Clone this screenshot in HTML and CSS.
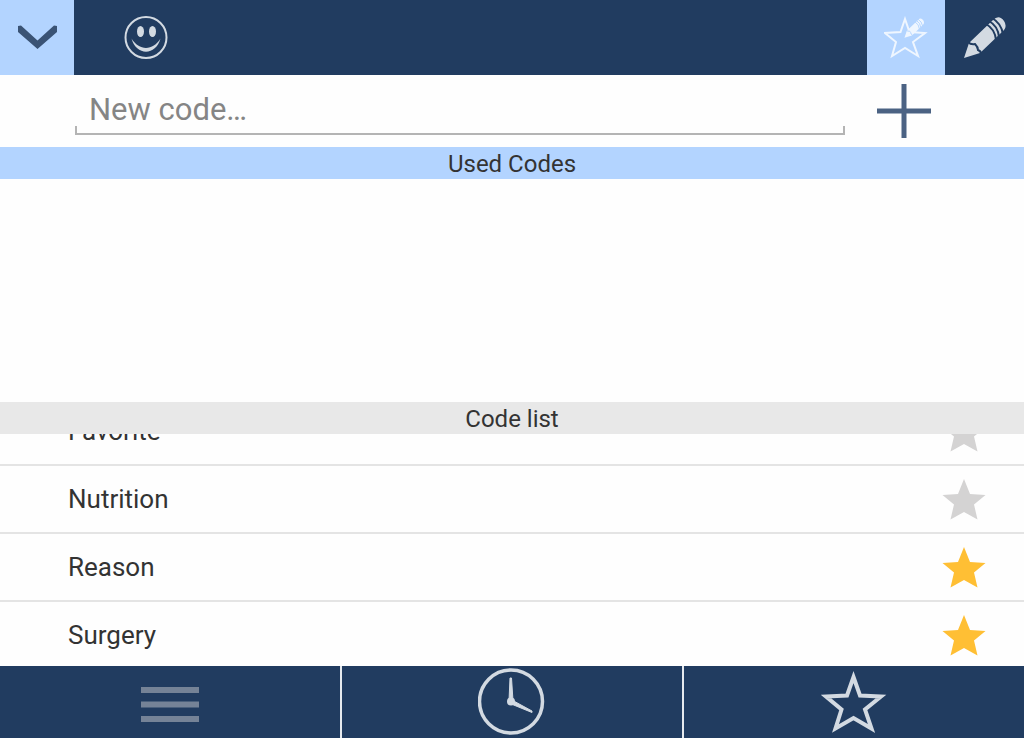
FILE: index.html
```html
<!DOCTYPE html>
<html lang="en">
<head>
    <meta charset="UTF-8" />
    <meta name="viewport" content="width=device-width, initial-scale=1.0" />
    <title>Codes</title>
    <link rel="stylesheet" href="styles.css">
</head>
<body>
    <!-- shared star shape for the code list -->
    <svg class="defs" aria-hidden="true">
        <symbol id="star" viewBox="0 0 44 42">
            <path d="M22 1L28 16L43.500 17L32 26.500L35.500 41.500L22 34L8.500 41.500L12 26.500L.5 17L16 16Z" />
        </symbol>
    </svg>

    <header class="topbar">
        <button class="tool active collapse" aria-label="Collapse">
            <svg width="40" height="26" viewBox="0 0 40 26">
                <path d="M1 1L4 .5L20.500 15.500L37 .5L40 1V7L20.500 24L1 7Z" fill="#3a5375" />
            </svg>
        </button>
        <button class="tool smiley" aria-label="Smiley">
            <svg width="44" height="44" viewBox="0 0 44 44" fill="#d3dae2">
                <circle cx="22" cy="21.500" r="20.500" fill="none" stroke="#d3dae2" stroke-width="2" />
                <ellipse cx="16.500" cy="15.500" rx="3.500" ry="5.500" />
                <ellipse cx="28.500" cy="15.500" rx="3.500" ry="5.500" />
                <path d="M7.500 22.500C15 35 29 35 36.500 22.500C32 40 12 40 7.500 22.500Z" />
            </svg>
        </button>
        <button class="tool active favorites" aria-label="Edit favorites">
            <svg width="44" height="44" viewBox="0 0 44 44">
                <path d="M21 3L25.500 16L41 17L29 26L34 40L21 32L8 40L12 26L1 17L16.500 16Z" fill="none" stroke="#eff6ff" stroke-width="2" />
                <g transform="translate(20 2) scale(.47)" fill="#eff6ff" stroke="#b3d4ff">
                    <use href="#pencil" />
                </g>
            </svg>
        </button>
        <button class="tool edit" aria-label="Edit">
            <svg width="44" height="44" viewBox="0 0 44 44">
                <g id="pencil">
                    <path d="M1 42L6 27L30 4Q36 -2 41 5Q45 11 39 16L17 37Z" stroke="none" />
                    <path d="M5 26Q8 29 12 28Q15 31 15 34Q18 35 18 38M23 8Q32 13 33 24M26 5Q35 10 36 21M29 2Q38 7 40 18" fill="none" stroke-width="2" />
                </g>
            </svg>
        </button>
    </header>

    <form class="new-code">
        <div class="field">
            <input type="text" placeholder="New code…" aria-label="New code" />
        </div>
        <button type="button" class="add" aria-label="Add code">
            <svg width="54" height="54" viewBox="0 0 54 54">
                <path d="M0 27H54M27 0V54" stroke="#4b6283" stroke-width="5" />
            </svg>
        </button>
    </form>

    <main class="content">
        <section class="used">
            <h2>Used Codes</h2>
        </section>
        <section class="codes">
            <h2>Code list</h2>
            <ul class="code-list">
                <li>
                    <span>Favorite</span>
                    <button class="star" aria-label="Favorite"><svg><use href="#star" /></svg></button>
                </li>
                <li>
                    <span>Nutrition</span>
                    <button class="star" aria-label="Nutrition"><svg><use href="#star" /></svg></button>
                </li>
                <li>
                    <span>Reason</span>
                    <button class="star on" aria-label="Reason"><svg><use href="#star" /></svg></button>
                </li>
                <li>
                    <span>Surgery</span>
                    <button class="star on" aria-label="Surgery"><svg><use href="#star" /></svg></button>
                </li>
            </ul>
        </section>
    </main>

    <nav class="bottombar">
        <button aria-label="List">
            <svg width="58" height="66" viewBox="0 0 58 66">
                <path d="M0 21H58M0 35.500H58M0 50H58" stroke="#758397" stroke-width="6" />
            </svg>
        </button>
        <button aria-label="Recent">
            <svg width="68" height="68" viewBox="0 0 68 68">
                <circle cx="33" cy="33.500" r="31.500" fill="none" stroke="#d3dae2" stroke-width="3.500" />
                <circle cx="33" cy="33.500" r="4" fill="#d3dae2" />
                <path d="M31 33L32 10H33.500L35 33ZM33 31.500L54 43V44.500L32 35.500Z" fill="#d3dae2" stroke="#d3dae2" stroke-linejoin="round" />
            </svg>
        </button>
        <button aria-label="Favorites">
            <svg width="66" height="66" viewBox="0 0 66 66">
                <path d="M32.500 8L39 26.500L60 27.500L44 40.500L50.500 59.500L32.500 49L14.500 59.500L20.500 40.500L5 27.500L26 26.500Z" fill="none" stroke="#d3dae2" stroke-width="4" />
            </svg>
        </button>
    </nav>
</body>
</html>
```
FILE: styles.css
```css
:root {
    --navy: #213c60;
    --light-blue: #b3d4ff;
    --text: #333333;
}

* {
    box-sizing: border-box;
    margin: 0;
    padding: 0;
}

body {
    display: flex;
    flex-direction: column;
    height: 100vh;
    font-family: Roboto, sans-serif;
    background: #fefefe;
    color: var(--text);
}

button {
    display: flex;
    align-items: center;
    justify-content: center;
    border: none;
    background: none;
    cursor: pointer;
}

.defs {
    position: absolute;
    width: 0;
    height: 0;
}

.topbar {
    display: flex;
    flex: none;
    height: 75px;
    background: var(--navy);
}

.tool {
    width: 78px;
}

.tool.active {
    background: var(--light-blue);
}

.tool.collapse {
    width: 74px;
}

.tool.smiley {
    width: 144px;
    margin-right: auto;
}

.tool.edit {
    width: 79px;
    fill: #d3dae2;
    stroke: var(--navy);
}

.new-code {
    display: flex;
    flex: none;
    height: 72px;
    padding: 0 61px 0 75px;
}

.field {
    position: relative;
    flex: 1;
    height: 60px;
}

/* underline with short upturned ends */
.field::after {
    content: "";
    position: absolute;
    left: 0;
    right: 0;
    bottom: 0;
    height: 7px;
    border: solid #b4b4b4;
    border-width: 0 2px 2px;
    pointer-events: none;
}

.field input {
    width: 100%;
    height: 100%;
    padding: 8px 14px 0;
    border: none;
    outline: none;
    background: none;
    font-family: inherit;
    font-size: 31px;
    color: var(--text);
}

.field input::placeholder {
    color: #858585;
    opacity: 1;
}

.add {
    width: 118px;
}

.content {
    display: flex;
    flex: 1;
    flex-direction: column;
    min-height: 0;
}

.used {
    flex: 85;
}

.codes {
    display: flex;
    flex: 88;
    flex-direction: column;
    min-height: 0;
}

h2 {
    flex: none;
    height: 32px;
    line-height: 34px;
    text-align: center;
    font-size: 24px;
    font-weight: 400;
    background: #e8e8e8;
}

.used h2 {
    background: var(--light-blue);
}

.code-list {
    flex: 1;
    min-height: 0;
    overflow: hidden;
    list-style: none;
}

.code-list li {
    display: flex;
    align-items: center;
    justify-content: space-between;
    height: 68px;
    padding: 0 38px 0 68px;
    border-bottom: 2px solid #e4e4e4;
    font-size: 26px;
}

/* list is scrolled part-way past its first row */
.code-list li:first-child {
    margin-top: -36px;
}

.star {
    fill: #d4d3d3;
}

.star.on {
    fill: #ffbf34;
}

.star svg {
    width: 44px;
    height: 42px;
}

.bottombar {
    display: flex;
    flex: none;
    height: 72px;
    background: var(--navy);
}

.bottombar button {
    flex: 1;
}

.bottombar button + button {
    border-left: 2px solid #e6eaee;
}
```
